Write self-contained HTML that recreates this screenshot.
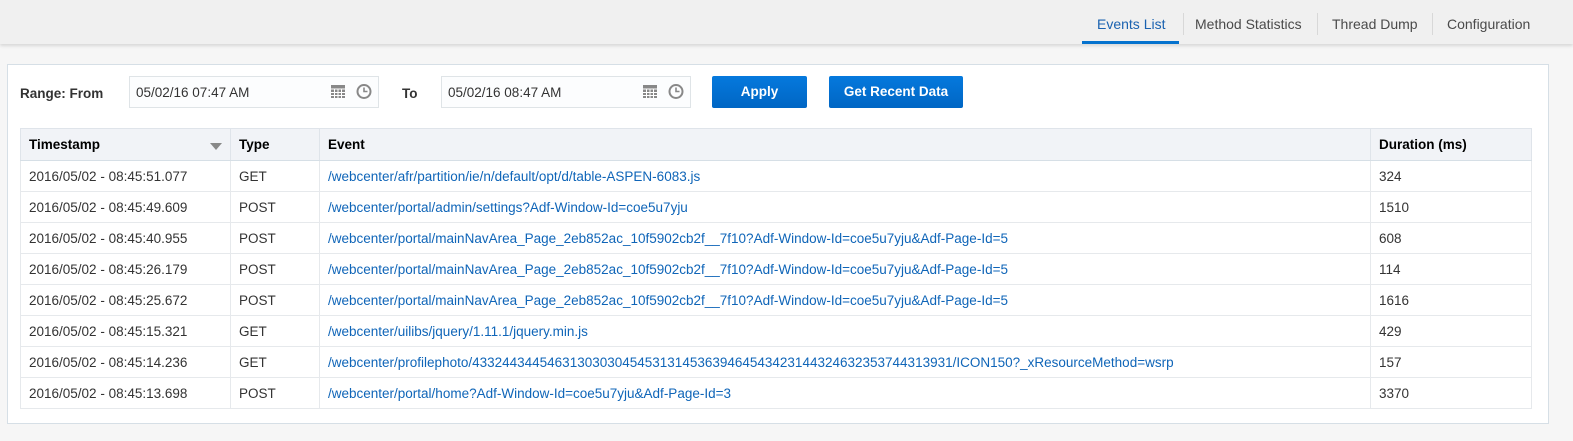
<!DOCTYPE html>
<html style="width:1573px;height:441px;overflow:hidden"><head><style>
*{box-sizing:border-box;margin:0;padding:0}
body{width:1573px;height:441px;background:#f6f6f6;font-family:"Liberation Sans",sans-serif;font-size:13.5px;color:#333;position:relative;overflow:hidden}
.top{position:absolute;left:0;top:0;width:1573px;height:44px;background:#f0f0f0;box-shadow:0 2px 3px rgba(0,0,0,.12)}
.tab{position:absolute;top:16px;font-size:14px;color:#4a4a4a;white-space:nowrap}
.sep{position:absolute;top:13px;width:1px;height:22px;background:#d8d8d8}
.panel{position:absolute;left:7px;top:64px;width:1542px;height:360px;background:#fff;border:1px solid #d6dfe6}
.lbl{position:absolute;font-weight:bold;font-size:13.5px;color:#333}
.inp{position:absolute;top:76px;height:32px;border:1px solid #dfe4e7;background:#fcfdfe;font-size:13.5px;padding:8px 6px;color:#333}
.btn{position:absolute;top:76px;height:32px;background:linear-gradient(#0579dd,#0066c4);color:#fff;font-weight:bold;font-size:13.5px;text-align:center;line-height:32px;border-radius:2px}
table{position:absolute;left:20px;top:128px;width:1512px;border-collapse:collapse;border:1px solid #d6dfe6;table-layout:fixed}
td,th{border:1px solid #e6e9ec;height:31px;padding:0 8px;text-align:left;font-size:13.5px;white-space:nowrap;overflow:hidden}
th{background:#f1f3f7;height:32px;color:#000;font-weight:bold;border-color:#dfe4ea;border-bottom:1px solid #d6dfe6}
td a{color:#0f65b8;text-decoration:none}
</style></head><body>
<div class="top">
<span class="tab" style="left:1097px;color:#1a62b0">Events List</span>
<div style="position:absolute;left:1082px;top:41px;width:97px;height:3px;background:#0572ce"></div>
<div class="sep" style="left:1183px"></div>
<span class="tab" style="left:1195px">Method Statistics</span>
<div class="sep" style="left:1317px"></div>
<span class="tab" style="left:1332px">Thread Dump</span>
<div class="sep" style="left:1432px"></div>
<span class="tab" style="left:1447px">Configuration</span>
</div>
<div class="panel"></div>
<span class="lbl" style="left:20px;top:86px">Range: From</span>
<div class="inp" style="left:129px;width:250px">05/02/16 07:47 AM</div>
<span class="lbl" style="left:402px;top:86px">To</span>
<div class="inp" style="left:441px;width:250px">05/02/16 08:47 AM</div>
<svg style="position:absolute;left:330px;top:83px" width="48" height="17" viewBox="0 0 48 17">
<rect x="1" y="2" width="14" height="13" fill="#888"/><g stroke="#fff" stroke-width="1"><line x1="1" y1="6" x2="15" y2="6"/><line x1="1" y1="9.5" x2="15" y2="9.5"/><line x1="1" y1="12.5" x2="15" y2="12.5"/><line x1="4.5" y1="6" x2="4.5" y2="15"/><line x1="8" y1="6" x2="8" y2="15"/><line x1="11.5" y1="6" x2="11.5" y2="15"/></g>
<circle cx="34" cy="8.5" r="6.5" fill="none" stroke="#888" stroke-width="2"/><path d="M34 4.5V8.5H37.5" fill="none" stroke="#888" stroke-width="1.6"/></svg>
<svg style="position:absolute;left:642px;top:83px" width="48" height="17" viewBox="0 0 48 17">
<rect x="1" y="2" width="14" height="13" fill="#888"/><g stroke="#fff" stroke-width="1"><line x1="1" y1="6" x2="15" y2="6"/><line x1="1" y1="9.5" x2="15" y2="9.5"/><line x1="1" y1="12.5" x2="15" y2="12.5"/><line x1="4.5" y1="6" x2="4.5" y2="15"/><line x1="8" y1="6" x2="8" y2="15"/><line x1="11.5" y1="6" x2="11.5" y2="15"/></g>
<circle cx="34" cy="8.5" r="6.5" fill="none" stroke="#888" stroke-width="2"/><path d="M34 4.5V8.5H37.5" fill="none" stroke="#888" stroke-width="1.6"/></svg>
<div class="btn" style="left:712px;width:95px">Apply</div>
<div class="btn" style="left:829px;width:134px">Get Recent Data</div>
<table>
<colgroup><col style="width:210px"><col style="width:89px"><col><col style="width:161px"></colgroup>
<tr><th style="position:relative">Timestamp<span style="position:absolute;right:8px;top:14px;width:0;height:0;border-left:6px solid transparent;border-right:6px solid transparent;border-top:7px solid #888"></span></th><th>Type</th><th>Event</th><th>Duration (ms)</th></tr>
<tr><td>2016/05/02 - 08:45:51.077</td><td>GET</td><td><a>/webcenter/afr/partition/ie/n/default/opt/d/table-ASPEN-6083.js</a></td><td>324</td></tr>
<tr><td>2016/05/02 - 08:45:49.609</td><td>POST</td><td><a>/webcenter/portal/admin/settings?Adf-Window-Id=coe5u7yju</a></td><td>1510</td></tr>
<tr><td>2016/05/02 - 08:45:40.955</td><td>POST</td><td><a>/webcenter/portal/mainNavArea_Page_2eb852ac_10f5902cb2f__7f10?Adf-Window-Id=coe5u7yju&amp;Adf-Page-Id=5</a></td><td>608</td></tr>
<tr><td>2016/05/02 - 08:45:26.179</td><td>POST</td><td><a>/webcenter/portal/mainNavArea_Page_2eb852ac_10f5902cb2f__7f10?Adf-Window-Id=coe5u7yju&amp;Adf-Page-Id=5</a></td><td>114</td></tr>
<tr><td>2016/05/02 - 08:45:25.672</td><td>POST</td><td><a>/webcenter/portal/mainNavArea_Page_2eb852ac_10f5902cb2f__7f10?Adf-Window-Id=coe5u7yju&amp;Adf-Page-Id=5</a></td><td>1616</td></tr>
<tr><td>2016/05/02 - 08:45:15.321</td><td>GET</td><td><a>/webcenter/uilibs/jquery/1.11.1/jquery.min.js</a></td><td>429</td></tr>
<tr><td>2016/05/02 - 08:45:14.236</td><td>GET</td><td><a>/webcenter/profilephoto/4332443445463130303045453131453639464543423144324632353744313931/ICON150?_xResourceMethod=wsrp</a></td><td>157</td></tr>
<tr><td>2016/05/02 - 08:45:13.698</td><td>POST</td><td><a>/webcenter/portal/home?Adf-Window-Id=coe5u7yju&amp;Adf-Page-Id=3</a></td><td>3370</td></tr>
</table>
</body></html>
